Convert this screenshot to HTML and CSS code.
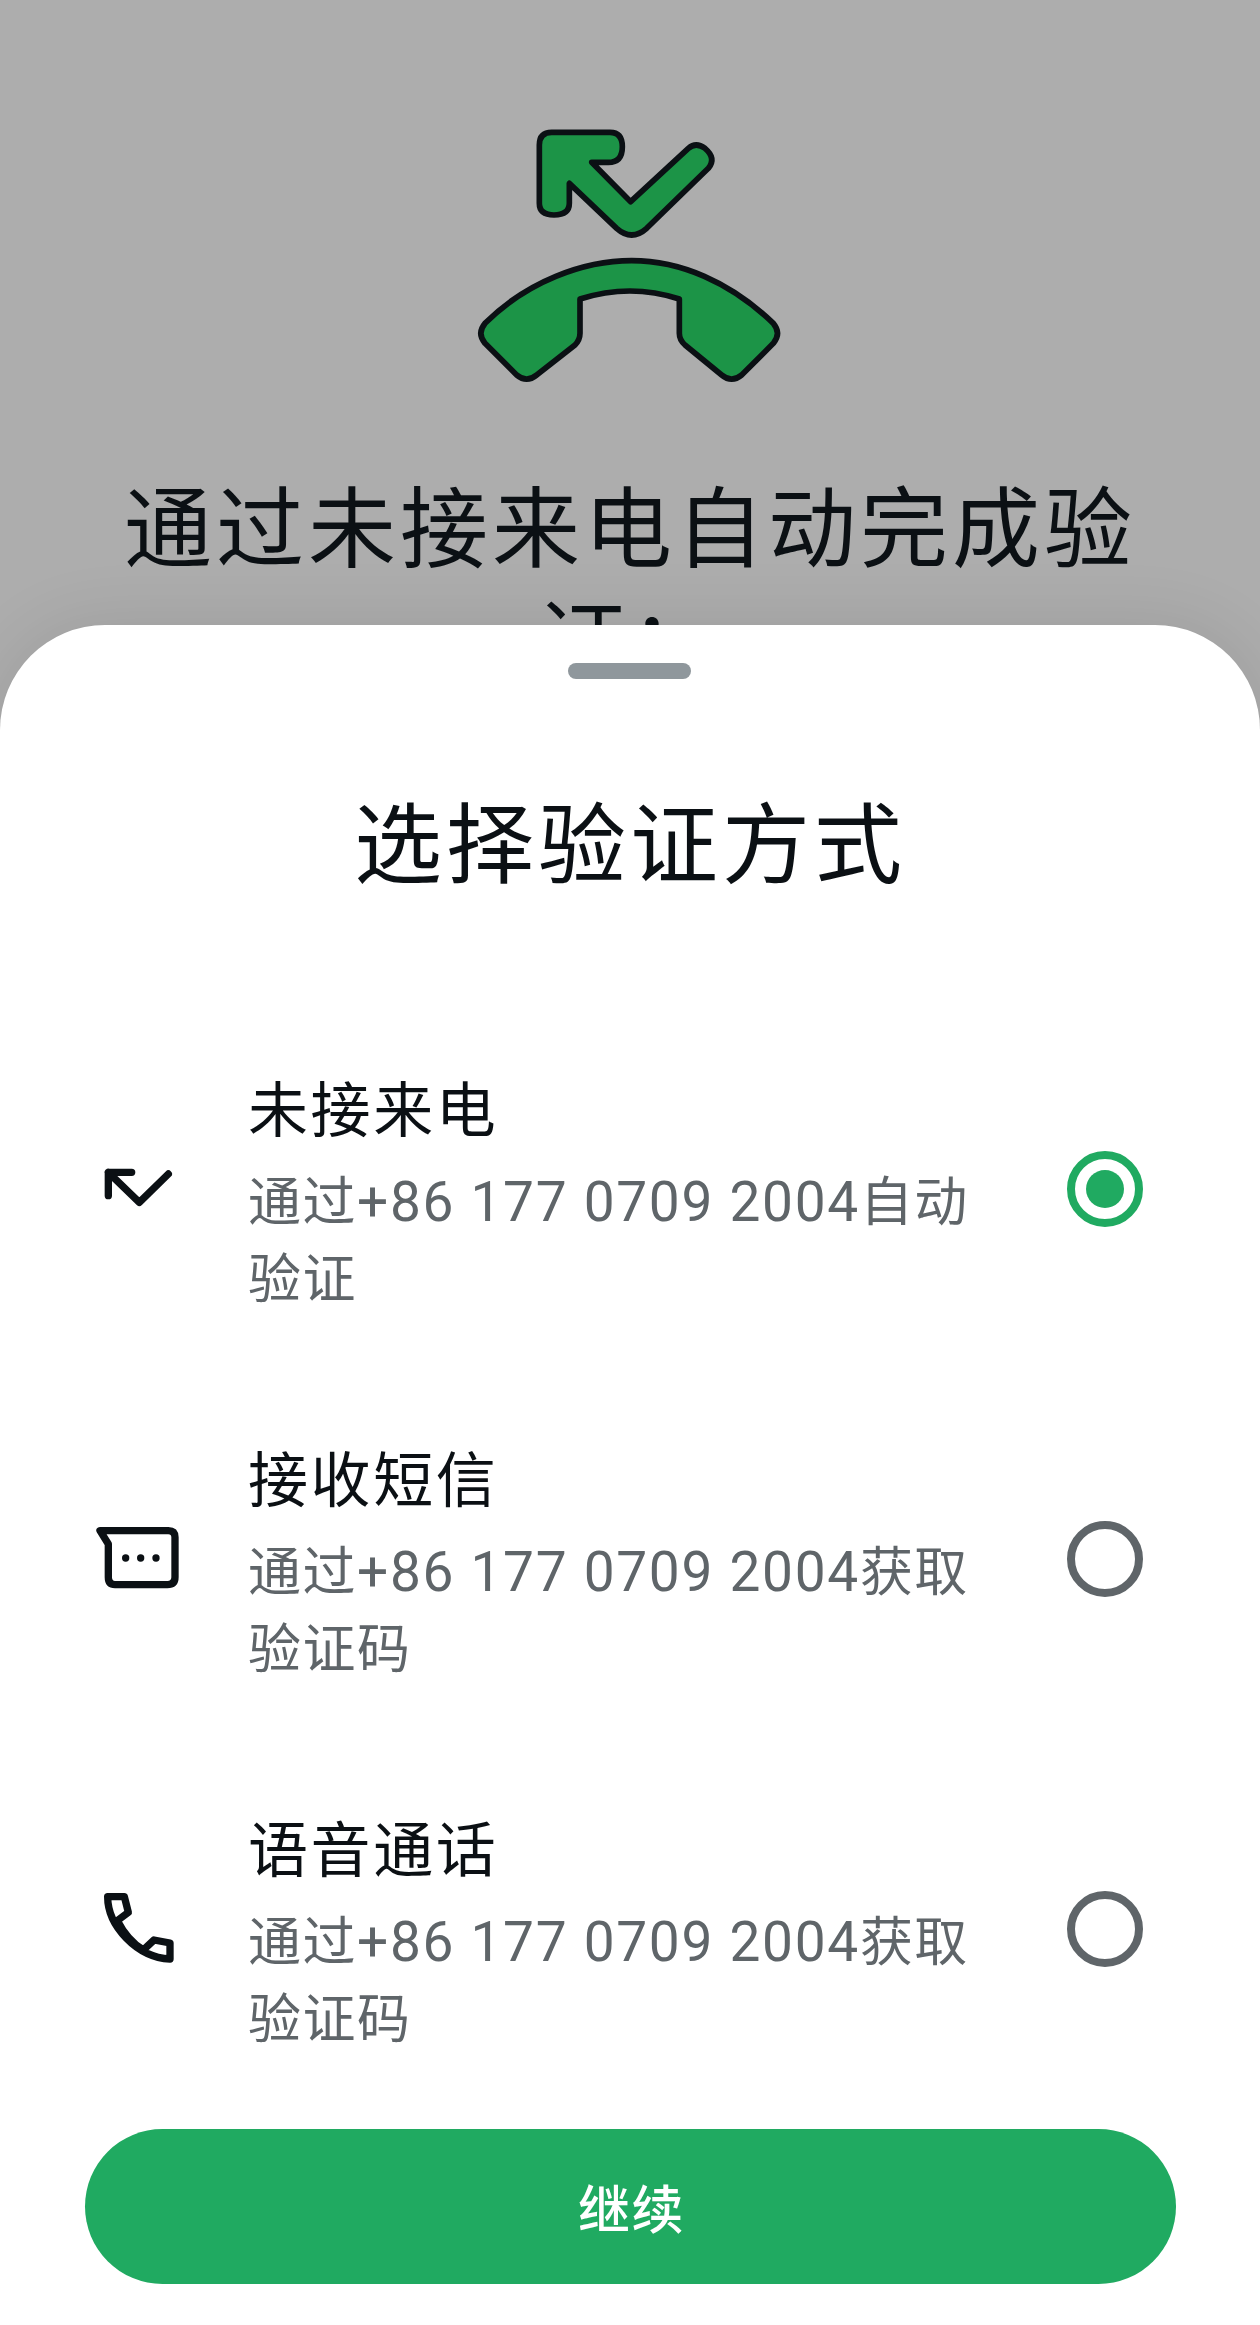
FILE: index.html
```html
<!DOCTYPE html>
<html lang="zh-CN">
<head>
    <meta charset="UTF-8">
    <meta name="viewport" content="width=device-width, initial-scale=1.0">
    <title>选择验证方式</title>
    <link rel="stylesheet" href="styles.css">
</head>
<body>
    <div class="screen">
        <div class="hero">
            <svg class="hero-icon" viewBox="0 0 1140 900">
                <path d="M335 97H510Q547 97 547 140Q547 187 505 187H455L572 305L745 145Q768 125 795 145Q830 175 805 205L620 385Q575 425 530 385L388 250V310Q388 345 342 345Q298 345 298 310V135Q298 97 335 97Z"/>
                <path d="M575 482C720 482 870 545 1000 670Q1025 700 1000 730L905 825Q875 850 845 825L735 735Q718 720 718 700V597C620 565 520 565 420 597V700Q420 720 405 735L290 825Q260 850 230 825L135 730Q110 700 135 670C260 545 430 482 575 482Z"/>
            </svg>
            <h1 class="hero-title">通过未接来电自动完成验证：</h1>
        </div>

        <div class="sheet">
            <div class="handle"></div>
            <h2 class="sheet-title">选择验证方式</h2>

            <div class="options">
                <div class="option">
                    <svg class="option-icon" viewBox="0 0 360 360">
                        <path d="M85 200V130H155M85 130L178 220L265 135"/>
                    </svg>
                    <div class="option-text">
                        <div class="option-name">未接来电</div>
                        <div class="option-desc">通过<span class="phone">+86 177 0709 2004</span>自动<br>验证</div>
                    </div>
                    <div class="radio radio-on"></div>
                </div>

                <div class="option">
                    <svg class="option-icon" viewBox="0 0 360 360">
                        <path d="M60 95H265Q285 95 285 115V235Q285 257 262 257H105Q85 257 85 235V135Z"/>
                        <circle class="dot" cx="137" cy="177" r="11"/>
                        <circle class="dot" cx="182" cy="177" r="11"/>
                        <circle class="dot" cx="228" cy="177" r="11"/>
                    </svg>
                    <div class="option-text">
                        <div class="option-name">接收短信</div>
                        <div class="option-desc">通过<span class="phone">+86 177 0709 2004</span>获取<br>验证码</div>
                    </div>
                    <div class="radio"></div>
                </div>

                <div class="option">
                    <svg class="option-icon" viewBox="0 0 360 360">
                        <path d="M83 83C83 170 170 265 270 270V222L222 213L190 243C160 225 130 190 112 155L145 130L133 83Z"/>
                    </svg>
                    <div class="option-text">
                        <div class="option-name">语音通话</div>
                        <div class="option-desc">通过<span class="phone">+86 177 0709 2004</span>获取<br>验证码</div>
                    </div>
                    <div class="radio"></div>
                </div>
            </div>

            <button class="continue" type="button">继续</button>
        </div>
    </div>
</body>
</html>
```

FILE: styles.css
```css
body {
    margin: 0;
    font-family: Roboto, "Noto Sans CJK SC", sans-serif;
    color: #0b1014;
}

.screen {
    position: relative;
    height: 2325px;
    overflow: hidden;
    background-color: #adadad;
}

.hero {
    display: flex;
    flex-direction: column;
    align-items: center;
    padding: 100px 120px 0;
}

.hero-icon {
    width: 380px;
    height: 300px;
}

.hero-icon path {
    fill: #1c9447;
    stroke: #0b1014;
    stroke-width: 17;
    stroke-linejoin: round;
}

.hero-title {
    margin: 73px 0 0;
    font-size: 88px;
    font-weight: 400;
    line-height: 113px;
    letter-spacing: 4px;
    text-align: center;
}

.sheet {
    position: absolute;
    left: 0;
    right: 0;
    bottom: 0;
    height: 1700px;
    box-sizing: border-box;
    padding-top: 38px;
    background: #ffffff;
    border-radius: 105px 105px 0 0;
    box-shadow: 0 0 70px rgba(0, 0, 0, 0.1);
}

.handle {
    width: 123px;
    height: 16px;
    margin-left: 568px;
    border-radius: 8px;
    background-color: #8f979c;
}

.sheet-title {
    margin: 111px 0 0;
    font-size: 88px;
    font-weight: 400;
    line-height: 112px;
    letter-spacing: 4px;
    text-align: center;
}

.options {
    display: flex;
    flex-direction: column;
    gap: 123px;
    margin-top: 163px;
    padding: 0 117px 0 80px;
}

.option {
    display: flex;
    align-items: center;
    height: 247px;
}

.option-icon {
    flex: none;
    width: 120px;
    height: 120px;
    margin-right: 48px;
}

.option-icon path {
    fill: none;
    stroke: #0b1014;
    stroke-width: 22;
    stroke-linecap: round;
    stroke-linejoin: round;
}

.option-icon .dot {
    fill: #0b1014;
}

.option-text {
    flex: 1;
    padding: 14px 60px 0 0;
}

.option-name {
    font-size: 60px;
    line-height: 80px;
    letter-spacing: 2.6px;
}

.option-desc {
    margin-top: 12px;
    font-size: 53px;
    line-height: 77px;
    letter-spacing: 1.5px;
    color: #5f6569;
}

.phone {
    font-size: 55px;
    letter-spacing: 1.7px;
}

.radio {
    flex: none;
    box-sizing: border-box;
    width: 76px;
    height: 76px;
    border: 8px solid #5f6569;
    border-radius: 50%;
}

.radio-on {
    display: flex;
    align-items: center;
    justify-content: center;
    border-color: #20aa61;
}

.radio-on::after {
    content: "";
    width: 38px;
    height: 38px;
    border-radius: 50%;
    background-color: #20aa61;
}

.continue {
    display: block;
    width: 1091px;
    height: 155px;
    margin: 77px auto 0;
    padding: 0 0 0 3px;
    border: none;
    border-radius: 78px;
    background-color: #20aa61;
    color: #ffffff;
    font-family: inherit;
    font-size: 52px;
    font-weight: 500;
    letter-spacing: 1.5px;
}
```
